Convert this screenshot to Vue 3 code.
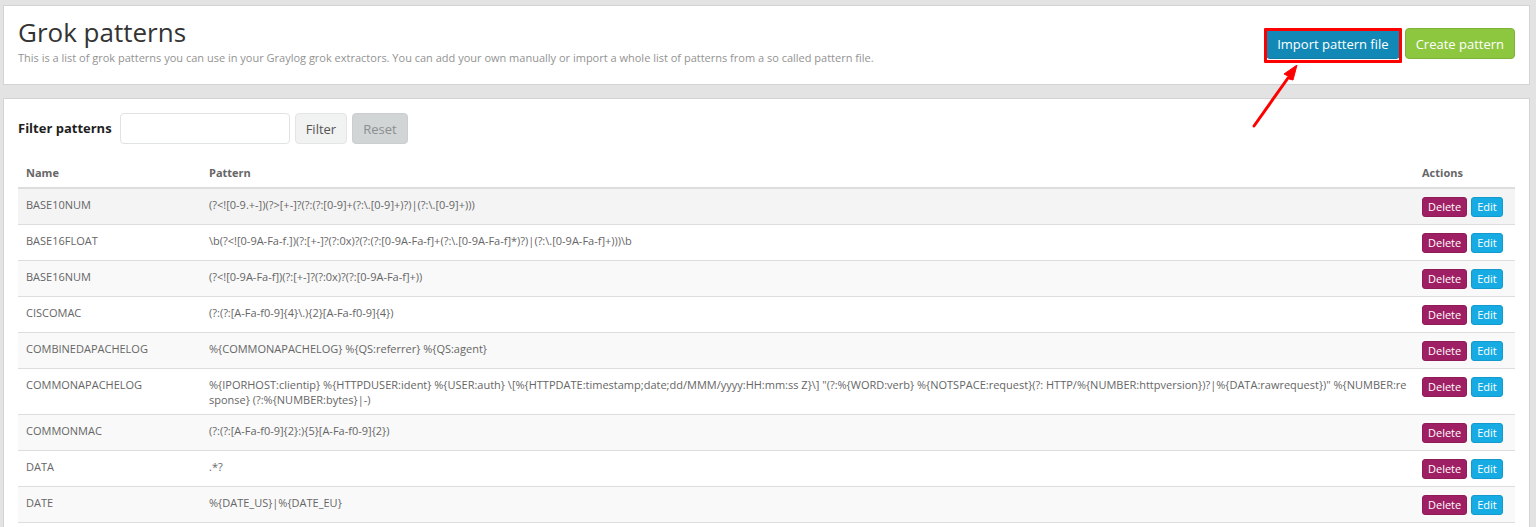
<script setup>
import { ref, computed } from 'vue'

const patterns = [
  { name: 'BASE10NUM', pattern: '(?<![0-9.+-])(?>[+-]?(?:(?:[0-9]+(?:\\.[0-9]+)?)|(?:\\.[0-9]+)))' },
  { name: 'BASE16FLOAT', pattern: '\\b(?<![0-9A-Fa-f.])(?:[+-]?(?:0x)?(?:(?:[0-9A-Fa-f]+(?:\\.[0-9A-Fa-f]*)?)|(?:\\.[0-9A-Fa-f]+)))\\b' },
  { name: 'BASE16NUM', pattern: '(?<![0-9A-Fa-f])(?:[+-]?(?:0x)?(?:[0-9A-Fa-f]+))' },
  { name: 'CISCOMAC', pattern: '(?:(?:[A-Fa-f0-9]{4}\\.){2}[A-Fa-f0-9]{4})' },
  { name: 'COMBINEDAPACHELOG', pattern: '%{COMMONAPACHELOG} %{QS:referrer} %{QS:agent}' },
  { name: 'COMMONAPACHELOG', pattern: '%{IPORHOST:clientip} %{HTTPDUSER:ident} %{USER:auth} \\[%{HTTPDATE:timestamp;date;dd/MMM/yyyy:HH:mm:ss Z}\\] "(?:%{WORD:verb} %{NOTSPACE:request}(?: HTTP/%{NUMBER:httpversion})?|%{DATA:rawrequest})" %{NUMBER:response} (?:%{NUMBER:bytes}|-)' },
  { name: 'COMMONMAC', pattern: '(?:(?:[A-Fa-f0-9]{2}:){5}[A-Fa-f0-9]{2})' },
  { name: 'DATA', pattern: '.*?' },
  { name: 'DATE', pattern: '%{DATE_US}|%{DATE_EU}' },
]

const query = ref('')
const applied = ref('')
const rows = computed(() =>
  patterns.filter((p) => p.name.toLowerCase().includes(applied.value.toLowerCase()))
)

function reset() {
  query.value = ''
  applied.value = ''
}
</script>

<template>
  <main class="page">
    <header class="panel header">
      <div>
        <h1>Grok patterns</h1>
        <p>This is a list of grok patterns you can use in your Graylog grok extractors. You can add your own manually or import a whole list of patterns from a so called pattern file.</p>
      </div>
      <div class="header-actions">
        <div class="callout">
          <button type="button" class="btn import">Import pattern file</button>
          <svg class="arrow" width="48" height="66" viewBox="0 0 48 66" aria-hidden="true">
            <path d="M3 61 L37 13" stroke="#f00" stroke-width="3" stroke-linecap="round" />
            <path d="M46 0 L33 9 L37 11 L38 14 L42 15 Z" fill="#f00" stroke="#f00" stroke-width="1" />
          </svg>
        </div>
        <button type="button" class="btn create">Create pattern</button>
      </div>
    </header>

    <section class="panel list">
      <form class="filter" @submit.prevent="applied = query">
        <label for="filter">Filter patterns</label>
        <input id="filter" v-model="query" type="text" />
        <button type="submit" class="btn apply">Filter</button>
        <button type="button" class="btn reset" :disabled="!applied" @click="reset">Reset</button>
      </form>
      <table>
        <thead>
          <tr>
            <th class="name">Name</th>
            <th>Pattern</th>
            <th class="actions">Actions</th>
          </tr>
        </thead>
        <tbody>
          <tr v-for="row in rows" :key="row.name">
            <td>{{ row.name }}</td>
            <td class="pattern">{{ row.pattern }}</td>
            <td>
              <div class="row-actions">
                <button type="button" class="btn small delete">Delete</button>
                <button type="button" class="btn small edit">Edit</button>
              </div>
            </td>
          </tr>
        </tbody>
      </table>
    </section>
  </main>
</template>

<style>
body {
  background: #e3e3e3;
}
</style>

<style scoped>
.page {
  box-sizing: border-box;
  min-height: 100vh;
  display: flex;
  flex-direction: column;
  gap: 13px;
  padding: 5px 6px 0 3px;
  font-family: "Open Sans", "Noto Sans", sans-serif;
  font-size: 11px;
  line-height: 15px;
  color: #666;
}
.panel {
  background: #fff;
  border: 1px solid #d3d3d3;
  padding: 14px;
}
.header {
  display: flex;
  justify-content: space-between;
  align-items: flex-start;
  padding: 9px 14px 19px;
}
h1 {
  margin: 0;
  font-size: 26px;
  line-height: 35px;
  font-weight: 400;
  color: #333;
}
p {
  margin: 0;
  color: #939393;
}
.header-actions {
  display: flex;
  align-items: flex-start;
  gap: 5px;
  padding-top: 13px;
}
.callout {
  position: relative;
}
.callout::after {
  content: "";
  position: absolute;
  inset: 0 -2px -4px;
  border: 3px solid #f00;
  border-radius: 1px;
  pointer-events: none;
}
.arrow {
  position: absolute;
  left: -15px;
  top: 37px;
  fill: none;
  pointer-events: none;
}
.btn {
  box-sizing: border-box;
  height: 31px;
  padding: 0 10px;
  border: 1px solid;
  border-radius: 4px;
  font-family: inherit;
  font-size: 13px;
  line-height: 20px;
  color: #fff;
  white-space: nowrap;
}
.import {
  background: #1288b7;
  border-color: #127ca7;
}
.create {
  background: #8dc63f;
  border-color: #7fb239;
}
.list {
  flex: 1;
  padding-bottom: 0;
  border-bottom: 0;
}
.filter {
  display: flex;
  align-items: center;
  gap: 5px;
  margin-bottom: 21px;
}
label {
  margin-right: 3px;
  font-size: 13px;
  font-weight: 700;
  color: #1f1f1f;
}
input {
  box-sizing: border-box;
  width: 170px;
  height: 31px;
  padding: 0 12px;
  border: 1px solid #dfe3e3;
  border-radius: 4px;
  font: inherit;
}
.apply {
  background: #f1f2f2;
  border-color: #e4e6e6;
  color: #555;
}
.reset {
  background: #d1d5d6;
  border-color: #cacecf;
  color: #8c8f90;
}
table {
  width: 100%;
  table-layout: fixed;
  border-spacing: 0;
}
th {
  padding: 0 8px 7px;
  border-bottom: 2px solid #ddd;
  text-align: left;
  font-weight: 700;
}
.name {
  width: 167px;
}
.actions {
  width: 85px;
}
td {
  box-sizing: border-box;
  height: 36px;
  padding: 8px 8px 7px;
  border-bottom: 1px solid #ddd;
  vertical-align: top;
}
.pattern {
  padding-right: 4px;
  word-break: break-all;
}
tbody tr:nth-child(odd) {
  background: #f9f9f9;
}
tbody tr:first-child {
  background: #f4f4f4;
}
.row-actions {
  display: flex;
  gap: 4px;
}
.small {
  height: 20px;
  padding: 0 5px;
  border-radius: 3px;
  font-size: 11px;
  line-height: 18px;
}
.delete {
  background: #9e1f63;
  border-color: #8f1c59;
}
.edit {
  background: #16ace3;
  border-color: #149bcd;
}
</style>
